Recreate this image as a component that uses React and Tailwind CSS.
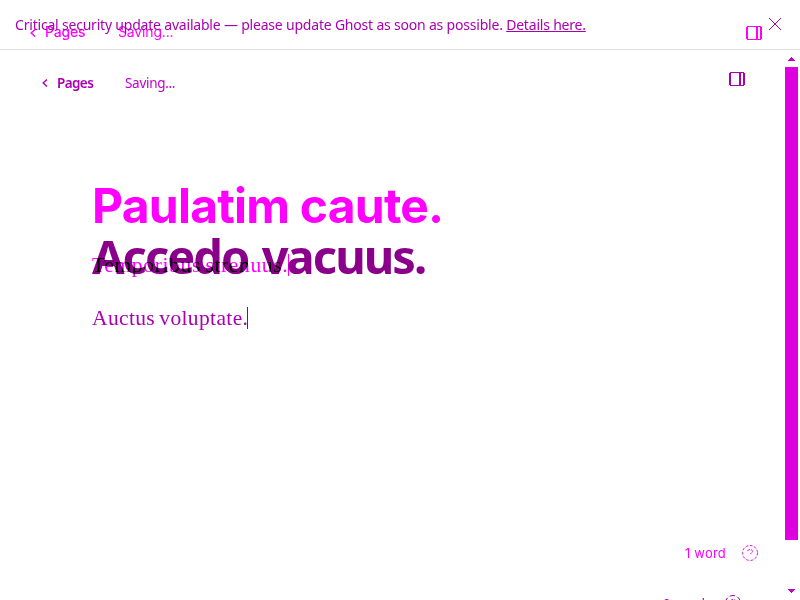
function Chevron({ className }) {
  return (
    <svg className={className} width="6" height="8" viewBox="0 0 6 8" fill="none" stroke="currentColor" strokeWidth="1.4">
      <path d="M5 0.5 1.2 4 5 7.5" />
    </svg>
  );
}

function SidebarIcon() {
  return (
    <svg className="shrink-0" width="16" height="14" viewBox="0 0 16 14" fill="currentColor" shapeRendering="crispEdges">
      <path d="M1 0H15V1H1ZM1 13H15V14H1ZM0 1H2V13H0ZM10 1H12V13H10ZM14 1H16V13H14Z" />
    </svg>
  );
}

function Help({ className, dashed }) {
  return (
    <svg className={className} width="16" height="16" viewBox="0 0 16 16" fill="none" stroke="currentColor">
      <circle cx="8" cy="8" r="7.5" stroke="#dddddd" />
      <circle cx="8" cy="8" r="7.5" strokeDasharray={dashed ? "2.2 2.2" : "5 3"} />
      <path d="M5.5 6.2Q6 4.5 8 4.5Q10.5 4.5 10.5 6.5Q10.3 7.5 8.2 9" strokeDasharray="3 1" />
      {!dashed && <path d="M7.5 11.5h1" />}
    </svg>
  );
}

function OldEditor() {
  return (
    <div className="col-start-1 row-start-1 flex h-[600px] flex-col overflow-hidden font-['Inter',sans-serif] text-[#ff00ff]">
      <header className="flex h-[66px] items-center pl-[30px] pr-[38px] text-[14px] leading-5">
        <Chevron />
        <span className="mb-[2px] ml-[9px] w-[73px] font-medium tracking-[-0.2px]">Pages</span>
        <span className="mb-[2px] flex-1 tracking-[-0.15px]">Saving...</span>
        <SidebarIcon />
      </header>
      <main className="flex-1 pl-[92px] pt-[112px]">
        <h1 className="whitespace-nowrap text-[48px] font-bold leading-[56px] tracking-[-0.78px]">Paulatim caute.</h1>
        <p className="mt-[17px] flex items-center whitespace-nowrap font-['Liberation_Serif',serif] text-[21.5px] leading-[28px]">
          <span className="w-[196px] tracking-[0.65px] [word-spacing:-1.5px]">Temporibus strenuus.</span>
          <i className="h-[22px] w-px bg-[#ff00ff]" />
        </p>
      </main>
      <footer className="flex h-[57px] items-start justify-end pr-[42px] text-[13px] leading-5">
        <span className="w-[57px] tracking-[0.2px]">1 word</span>
        <Help className="mt-[2px]" dashed />
      </footer>
    </div>
  );
}

function NewEditor() {
  return (
    <div className="col-start-1 row-start-1 flex h-[600px] flex-col overflow-hidden font-['Noto_Sans',sans-serif] text-[#a900b0]">
      <div className="flex h-[50px] shrink-0 items-center border-b border-[#dddddd] pl-[15px] pr-[19px] text-[14px] leading-5">
        <p className="flex-1 whitespace-nowrap tracking-[-0.2px]">
          Critical security update available — please update Ghost as soon as possible. <a className="underline underline-offset-1">Details here.</a>
        </p>
        <svg className="mb-px" width="12" height="12" viewBox="0 0 12 12" stroke="currentColor">
          <path d="M0 0 12 12M12 0 0 12" />
        </svg>
      </div>
      <div className="flex min-h-0 flex-1">
        <div className="flex min-w-0 flex-1 flex-col">
          <header className="flex h-[66px] shrink-0 items-center pl-[42px] pr-[40px] text-[13.5px] leading-5">
            <Chevron className="mb-px" />
            <span className="ml-[9px] w-[68px] font-semibold tracking-[-0.6px]">Pages</span>
            <span className="flex-1 tracking-[-0.3px] text-[#c000d0]">Saving...</span>
            <div className="mb-[8px]"><SidebarIcon /></div>
          </header>
          <main className="pl-[92px] pt-[112px]">
            <h1 className="whitespace-nowrap text-[47px] font-bold leading-[56px] tracking-[-1.95px] text-[#8b008b] [word-spacing:3px]">Accedo vacuus.</h1>
            <p className="mt-[20px] flex items-center whitespace-nowrap font-['Liberation_Serif',serif] text-[21.5px] leading-[28px]">
              <span className="w-[155px] tracking-[0.36px] [word-spacing:-1.5px]">Auctus voluptate.</span>
              <i className="h-[22px] w-px bg-[#8b008b]" />
            </p>
          </main>
          <footer className="mt-[262px] flex shrink-0 items-start justify-end pr-[44px] text-[13px] leading-5">
            <span className="-mt-px w-[62px]">0 words</span>
            <Help className="mt-px" />
          </footer>
        </div>
        <div className="flex w-[15px] shrink-0 flex-col items-start text-[#c000c8]">
          <svg className="ml-[3px] mt-[7px]" width="7" height="4" viewBox="0 0 7 4" fill="currentColor" shapeRendering="crispEdges"><path d="M0 4 3.5 0 7 4Z" /></svg>
          <div className="mt-[6px] h-[473px] w-[13px] bg-[#df00df]" />
          <svg className="ml-[3px] mt-[49px]" width="7" height="4" viewBox="0 0 7 4" fill="currentColor" shapeRendering="crispEdges"><path d="M0 0H7L3.5 4Z" /></svg>
        </div>
      </div>
    </div>
  );
}

export default function App() {
  return (
    <div className="isolate grid h-[600px] w-[800px] overflow-hidden bg-white">
      <OldEditor />
      <NewEditor />
      {/* Darkens the old paragraph wherever it crosses the new title. */}
      <p aria-hidden="true" className="col-start-1 row-start-1 mt-[251px] h-7 whitespace-nowrap pl-[92px] font-['Liberation_Serif',serif] text-[21.5px] leading-[28px] tracking-[0.65px] text-[#66ff66] mix-blend-color-burn [word-spacing:-1.5px]">
        Temporibus strenuus.
      </p>
    </div>
  );
}
